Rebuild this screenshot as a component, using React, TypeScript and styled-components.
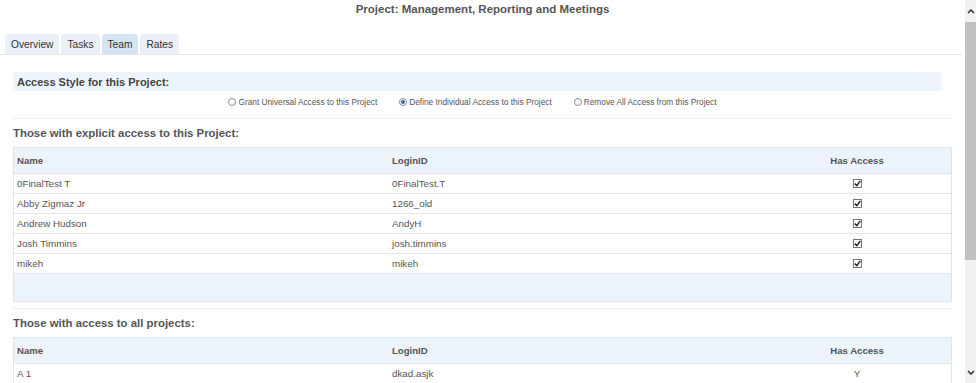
import React from 'react';
import styled, {createGlobalStyle} from "styled-components";

const GlobalStyle = createGlobalStyle`
  html, body {
    margin: 0;
    padding: 0;
    background: #fff;
    font-family: "Liberation Sans", Arial, sans-serif;
    color: #555;
  }
  * { box-sizing: border-box; }
`;

const Page = styled('div')`
  display: flex;
  width: 976px;
  height: 383px;
  overflow: hidden;
`;

const Main = styled('div')`
  flex: 1;
  min-width: 0;
`;

const Title = styled('div')`
  height: 22px;
  padding-top: 3px;
  text-align: center;
  font-size: 11.5px;
  font-weight: bold;
  color: #555;
`;

const TabBar = styled('div')`
  display: flex;
  gap: 2px;
  margin: 12px 3px 0 0;
  padding-left: 5px;
  border-bottom: 1px solid #e2e4e8;
`;

const Tab = styled('div')<{ $active?: boolean }>`
  height: 20px;
  padding: 0 6px;
  display: flex;
  align-items: center;
  font-size: 10.2px;
  color: #333;
  background: ${p => p.$active ? '#d6e3f4' : '#eaf0f8'};
  border-radius: 4px 4px 0 0;
`;

const Content = styled('div')`
  padding: 0 13px 0 13px;
`;

const AccessBox = styled('div')`
  margin: 17px 11px 0 0;
  height: 19px;
  padding-left: 4px;
  display: flex;
  align-items: center;
  background: #eef4fc;
  font-size: 11px;
  font-weight: bold;
  color: #444;
`;

const RadioRow = styled('div')`
  display: flex;
  justify-content: center;
  gap: 22px;
  height: 21px;
  align-items: center;
  margin-right: 20px;
  font-size: 8.3px;
  color: #555;
`;

const RadioOption = styled('label')`
  display: flex;
  align-items: center;
  gap: 2px;
`;

const RadioDot = styled('span')<{ $checked?: boolean }>`
  width: 8px;
  height: 8px;
  border-radius: 50%;
  border: 1px solid #7b8fa8;
  display: inline-flex;
  align-items: center;
  justify-content: center;
  background: #fff;
  &::after {
    content: '';
    width: 4px;
    height: 4px;
    border-radius: 50%;
    background: ${p => p.$checked ? '#3567b5' : 'transparent'};
  }
`;

const Separator = styled('div')`
  height: 1px;
  background: #eceef1;
  margin-top: 6px;
`;

const SectionTitle = styled('div')`
  height: 28px;
  display: flex;
  align-items: center;
  font-size: 11.4px;
  font-weight: bold;
  color: #555;
`;

const Table = styled('div')`
  border: 1px solid #dfe4ea;
  border-bottom: none;
`;

const Row = styled('div')<{ $head?: boolean }>`
  display: grid;
  grid-template-columns: 375px 374px 1fr;
  height: ${p => p.$head ? '26px' : '20px'};
  align-items: center;
  background: ${p => p.$head ? '#edf3fa' : '#fff'};
  border-bottom: 1px solid #e2e5e9;
  font-size: ${p => p.$head ? '9.6px' : '9.8px'};
  font-weight: ${p => p.$head ? 'bold' : 'normal'};
  color: #555;
`;

const Cell = styled('div')<{ $center?: boolean }>`
  padding-left: ${p => p.$center ? '0' : '3px'};
  display: flex;
  justify-content: ${p => p.$center ? 'center' : 'flex-start'};
`;

const Footer = styled('div')`
  height: 28px;
  background: #edf3fa;
  border-bottom: 1px solid #e2e5e9;
`;

const Check = styled('span')`
  width: 9px;
  height: 9px;
  border: 1px solid #777;
  background: #fff;
  display: inline-flex;
  align-items: center;
  justify-content: center;
`;

const Scrollbar = styled('div')`
  width: 11px;
  background: #f1f1f1;
  display: flex;
  flex-direction: column;
  align-items: center;
`;

const ScrollArrow = styled('div')`
  height: 22px;
  width: 100%;
  display: flex;
  align-items: center;
  justify-content: center;
`;

const Thumb = styled('div')`
  width: 100%;
  height: 238px;
  background: #c1c1c1;
`;

const ScrollSpacer = styled('div')`
  flex: 1;
`;

const CheckBox = () => (
    <Check>
        <svg width="7" height="7" viewBox="0 0 7 7">
            <path d="M0.8 3.6 L2.8 5.6 L6.3 0.9" fill="none" stroke="#222" strokeWidth="1.5"/>
        </svg>
    </Check>
);

const explicitUsers = [
    {name: '0FinalTest T', login: '0FinalTest.T'},
    {name: 'Abby Zigmaz Jr', login: '1266_old'},
    {name: 'Andrew Hudson', login: 'AndyH'},
    {name: 'Josh Timmins', login: 'josh.timmins'},
    {name: 'mikeh', login: 'mikeh'},
];

const allUsers = [
    {name: 'A 1', login: 'dkad.asjk'},
];

const App = () => {
    return (
        <Page>
            <GlobalStyle/>
            <Main>
                <Title>Project: Management, Reporting and Meetings</Title>
                <TabBar>
                    <Tab>Overview</Tab>
                    <Tab>Tasks</Tab>
                    <Tab $active>Team</Tab>
                    <Tab>Rates</Tab>
                </TabBar>
                <Content>
                    <AccessBox>Access Style for this Project:</AccessBox>
                    <RadioRow>
                        <RadioOption><RadioDot/>Grant Universal Access to this Project</RadioOption>
                        <RadioOption><RadioDot $checked/>Define Individual Access to this Project</RadioOption>
                        <RadioOption><RadioDot/>Remove All Access from this Project</RadioOption>
                    </RadioRow>
                    <Separator/>
                    <SectionTitle>Those with explicit access to this Project:</SectionTitle>
                    <Table>
                        <Row $head>
                            <Cell>Name</Cell>
                            <Cell>LoginID</Cell>
                            <Cell $center>Has Access</Cell>
                        </Row>
                        {explicitUsers.map(u => (
                            <Row key={u.login}>
                                <Cell>{u.name}</Cell>
                                <Cell>{u.login}</Cell>
                                <Cell $center><CheckBox/></Cell>
                            </Row>
                        ))}
                        <Footer/>
                    </Table>
                    <Separator/>
                    <SectionTitle>Those with access to all projects:</SectionTitle>
                    <Table>
                        <Row $head>
                            <Cell>Name</Cell>
                            <Cell>LoginID</Cell>
                            <Cell $center>Has Access</Cell>
                        </Row>
                        {allUsers.map(u => (
                            <Row key={u.login}>
                                <Cell>{u.name}</Cell>
                                <Cell>{u.login}</Cell>
                                <Cell $center>Y</Cell>
                            </Row>
                        ))}
                    </Table>
                </Content>
            </Main>
            <Scrollbar>
                <ScrollArrow>
                    <svg width="8" height="5" viewBox="0 0 8 5">
                        <path d="M1 4 L4 1 L7 4" fill="none" stroke="#333" strokeWidth="1.5"/>
                    </svg>
                </ScrollArrow>
                <Thumb/>
                <ScrollSpacer/>
                <ScrollArrow>
                    <svg width="8" height="5" viewBox="0 0 8 5">
                        <path d="M1 1 L4 4 L7 1" fill="none" stroke="#333" strokeWidth="1.5"/>
                    </svg>
                </ScrollArrow>
            </Scrollbar>
        </Page>
    );
};

export default App;
